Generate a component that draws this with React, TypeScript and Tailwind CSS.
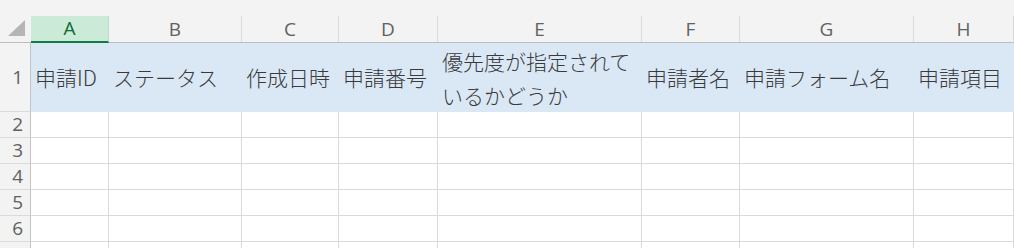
const cols = ['A', 'B', 'C', 'D', 'E', 'F', 'G', 'H'];

const headers: React.ReactNode[] = [
  '申請ID',
  'ステータス',
  '作成日時',
  '申請番号',
  <>
    優先度が指定されて
    <br />
    いるかどうか
  </>,
  '申請者名',
  '申請フォーム名',
  '申請項目',
];

const latin = { fontFamily: '"Open Sans", "Liberation Sans", sans-serif' };
const jp = { fontFamily: '"Noto Sans CJK JP", "Noto Sans", sans-serif' };

export default function App() {
  const grid = 'grid grid-cols-[31px_78px_133px_97px_99px_204px_98px_174px_1fr] grid-rows-[100%]';

  return (
    <div className="w-[1014px] h-[248px] overflow-hidden bg-white">
      {/* top strip */}
      <div className="h-[16px] bg-[#f3f3f3]" />

      {/* column headers */}
      <div className={`${grid} h-[27px] bg-[#f3f3f3] border-b border-[#bdbdbd]`}>
        <div className="relative">
          <svg width="31" height="26" className="absolute left-0 top-0">
            <polygon points="8,20 25,4 25,20" fill="#b5b5b5" />
          </svg>
        </div>
        {cols.map((c, i) =>
          i === 0 ? (
            <div
              key={c}
              style={latin}
              className="flex items-center justify-center bg-[#cbead7] border-b-2 border-[#107c41] -mb-px text-[19px] leading-none text-[#0e6b35] border-r border-r-[#b8dcc4]"
            >
              {c}
            </div>
          ) : (
            <div
              key={c}
              style={latin}
              className="flex items-center justify-center border-r border-[#dadada] text-[19px] leading-none text-[#616161]"
            >
              {c}
            </div>
          ),
        )}
      </div>

      {/* row 1 */}
      <div className={`${grid} h-[69px]`}>
        <div
          style={latin}
          className="flex items-center justify-end pr-[7px] bg-[#f3f3f3] border-r border-[#c4c4c4] border-b border-b-[#dadada] text-[19px] leading-none text-[#616161]"
        >
          1
        </div>
        {headers.map((h, i) => (
          <div
            key={i}
            style={jp}
            className={`flex items-center pl-[4px] bg-[#dae8f6] text-[21px] font-light text-[#3a3a3a] whitespace-nowrap ${
              i === 4 ? 'leading-[34px]' : 'leading-none'
            }`}
          >
            <span>{h}</span>
          </div>
        ))}
      </div>

      {/* empty rows */}
      {[2, 3, 4, 5, 6, 7].map((n) => (
        <div key={n} className={`${grid} h-[26px]`}>
          <div
            style={latin}
            className="flex items-center justify-end pr-[7px] bg-[#f3f3f3] border-r border-[#c4c4c4] border-b border-b-[#dadada] text-[19px] leading-none text-[#616161]"
          >
            {n < 7 ? n : ''}
          </div>
          {cols.map((c) => (
            <div key={c} className="border-r border-b border-[#dadada]" />
          ))}
        </div>
      ))}
    </div>
  );
}
